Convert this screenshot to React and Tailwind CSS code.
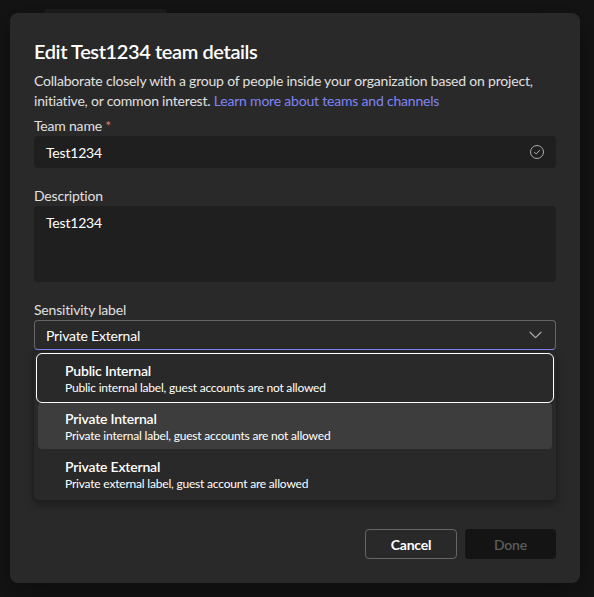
import React from "react";

function CheckCircle() {
  return (
    <svg width="16" height="16" viewBox="0 0 16 16" fill="none">
      <circle cx="8" cy="8" r="6.5" stroke="#adadad" strokeWidth="1" />
      <path d="M5.4 8.3 L7.2 10 L10.6 6.3" stroke="#adadad" strokeWidth="1" strokeLinecap="round" strokeLinejoin="round" />
    </svg>
  );
}

function Chevron() {
  return (
    <svg width="13" height="8" viewBox="0 0 13 8" fill="none">
      <path d="M1 1.2 L6.5 6.6 L12 1.2" stroke="#adadad" strokeWidth="1.2" strokeLinecap="round" strokeLinejoin="round" />
    </svg>
  );
}

const options = [
  { t: "Public Internal", d: "Public internal label, guest accounts are not allowed", focus: true },
  { t: "Private Internal", d: "Private internal label, guest accounts are not allowed", hover: true },
  { t: "Private External", d: "Private external label, guest account are allowed" },
];

export default function App() {
  return (
    <div className="w-[594px] h-[597px] overflow-hidden bg-[#141414] font-['Lato',sans-serif] tracking-[-0.2px]">
      <div className="ml-[44px] mt-[9px] w-[123px] h-[4px] rounded-t-[4px] bg-[#1f1f1f]" />
      <div className="ml-[10px] w-[570px] h-[570px] rounded-[8px] bg-[#292929] px-[24px] pt-[24px] pb-[24px] flex flex-col shadow-[0_8px_32px_rgba(0,0,0,0.4)]">
        <h1 className="text-[20px] leading-[28px] font-semibold text-white tracking-[-0.4px]">Edit Test1234 team details</h1>
        <p className="mt-[6px] text-[14px] leading-[20px] text-[#e0e0e0]">
          Collaborate closely with a group of people inside your organization based on project, initiative, or common interest.{" "}
          <span className="text-[#7f85f5]">Learn more about teams and channels</span>
        </p>

        <div className="mt-[5px] text-[14px] leading-[20px] text-[#e0e0e0]">
          Team name <span className="text-[#d67f83]">*</span>
        </div>
        <div className="h-[32px] rounded-[4px] bg-[#1f1f1f] flex items-center pl-[12px] pr-[11px] text-[14px] text-white">
          <span className="flex-1">Test1234</span>
          <CheckCircle />
        </div>

        <div className="mt-[18px] text-[14px] leading-[20px] text-[#e0e0e0]">Description</div>
        <div className="h-[76px] rounded-[4px] bg-[#1f1f1f] pl-[12px] pt-[7px] text-[14px] leading-[20px] text-white">Test1234</div>

        <div className="mt-[18px] text-[14px] leading-[20px] text-[#e0e0e0]">Sensitivity label</div>
        <div className="relative">
          <div className="h-[30px] rounded-[4px] border border-[#666666] border-b-[#7f85f5] flex items-center pl-[11px] pr-[13px] text-[14px] text-white">
            <span className="flex-1">Private External</span>
            <Chevron />
          </div>
          <div className="absolute left-0 right-0 top-[32px] rounded-[4px] bg-[#292929] px-[4px] py-[3px] flex flex-col gap-[2px] shadow-[0_4px_10px_rgba(0,0,0,0.35),0_0_2px_rgba(0,0,0,0.3)]">
            {options.map((o) => (
              <div
                key={o.t}
                className={
                  "h-[46px] rounded-[4px] pl-[27px] pt-[7px] flex flex-col " +
                  (o.hover ? "bg-[#3d3d3d] " : "") +
                  (o.focus ? "outline outline-1 outline-offset-1 outline-white " : "")
                }
              >
                <div className="text-[14px] leading-[18px] font-semibold text-[#ffffff]">{o.t}</div>
                <div className="text-[12px] leading-[16px] text-[#ffffff]">{o.d}</div>
              </div>
            ))}
          </div>
        </div>

        <div className="mt-auto flex justify-end gap-[8px]">
          <button className="w-[92px] h-[30px] rounded-[4px] border border-[#666666] text-[14px] font-bold text-white">Cancel</button>
          <button className="w-[91px] h-[30px] rounded-[4px] bg-[#141414] text-[14px] font-semibold text-[#5c5c5c]">Done</button>
        </div>
      </div>
    </div>
  );
}
